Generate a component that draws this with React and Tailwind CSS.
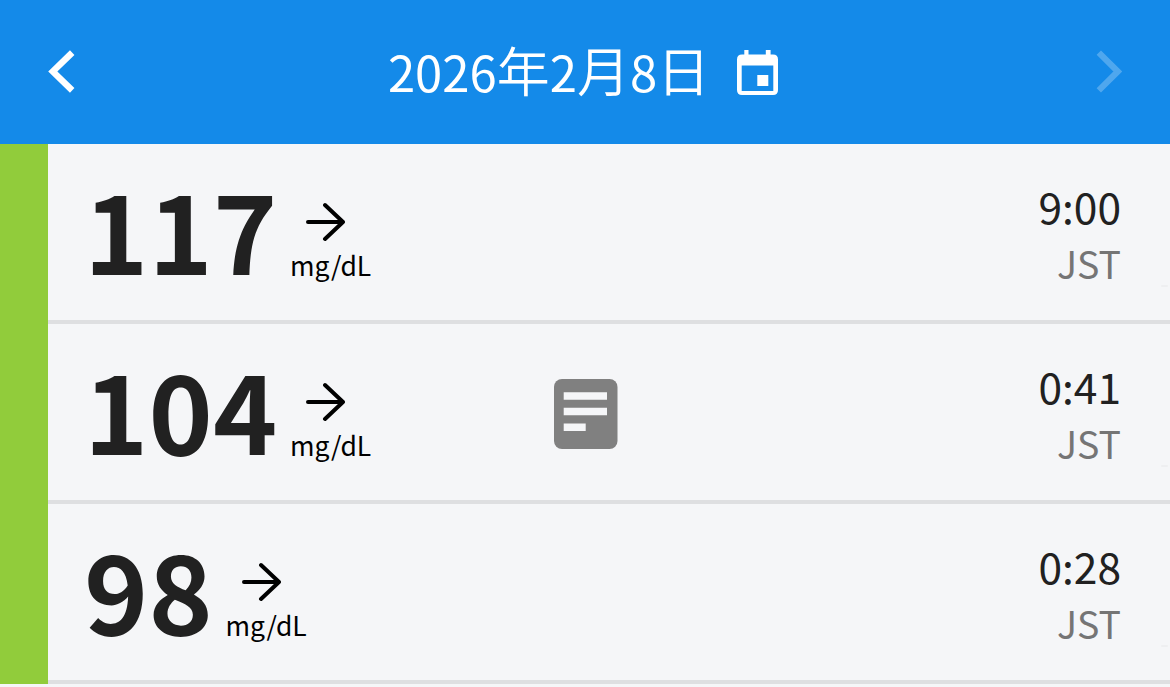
const rows = [
  { value: '117', time: '9:00' },
  { value: '104', time: '0:41', note: true },
  { value: '98', time: '0:28' },
];

function Kanji({ children }) {
  return <span className="text-[53px] font-[350]">{children}</span>;
}

function Reading({ value, time, note }) {
  return (
    <section className="grid h-[180px] shrink-0 grid-cols-[470px_64px_1fr_49px] border-b-4 border-[#dedfe1] pl-[36px]">
      <div className="flex">
        <div className="-mt-[4px] text-[109px] leading-[176px] font-bold tracking-[0.2px] text-[#212121]">{value}</div>
        <div className="ml-[12.5px] flex flex-col pt-[58px] text-black">
          <svg className="ml-[15px]" width="40" height="40" viewBox="0 0 40 40" fill="none" stroke="currentColor" strokeWidth="4" strokeLinecap="round" strokeLinejoin="round"><path d="M3 20H38M20 3L38 20L20 37" /></svg>
          <div className="mt-[5px] text-[26.5px] leading-9">mg/dL</div>
        </div>
      </div>
      <div className="pt-[55px]">
        {note && <svg width="64" height="70" viewBox="0 0 64 70"><rect width="63.5" height="70" rx="8" fill="#808080" /><path fill="#f5f6f8" d="M9.7 13.3h43.3v7.5H9.7zM9.7 28.8h43.3v7.5H9.7zM9.7 44.6h22v7.5H9.7z" /></svg>}
      </div>
      <div className="flex flex-col items-end pt-[35px]">
        <div className="text-[42.5px] leading-[54px] text-[#212121]">{time}</div>
        <div className="text-[37.5px] leading-[60px] text-[#757575]">JST</div>
      </div>
      <div className="flex justify-end pt-[141px] pr-[2px]"><div className="h-[2px] w-[7px] rounded-full bg-[#eeeff1]" /></div>
    </section>
  );
}

export default function App() {
  return (
    <main className="flex h-[687px] w-[1170px] flex-col overflow-hidden bg-[#f5f6f8] font-['Noto_Sans_CJK_JP',sans-serif]">
      <header className="flex h-36 shrink-0 items-center justify-between bg-[#148ae9] px-12 text-white">
        <svg width="28" height="44" viewBox="0 0 28 44" fill="none" stroke="currentColor" strokeWidth="6.4"><path d="M24.2 2.6L4.8 21.5L24.2 40.4" /></svg>
        <div className="flex items-center gap-[27px] pr-[4px]">
          <h1 className="-mt-[5px] text-[49px] leading-[70px]">2026<Kanji>年</Kanji>2<Kanji>月</Kanji>8<Kanji>日</Kanji></h1>
          <svg width="41" height="45" viewBox="0 0 41 45"><path fill="currentColor" fillRule="evenodd" d="M7.3 0h4.2v4.5h17.3V0h4.8v4.5H36q5 0 5 5V40q0 5-5 5H5q-5 0-5-5V9.500q0-5 5-5h2.300zM4.700 15.500v25.500h31.600V15.500zM20.300 25h11v11h-11z" /></svg>
        </div>
        <svg className="opacity-25" width="28" height="44" viewBox="0 0 28 44" fill="none" stroke="currentColor" strokeWidth="6.2"><path d="M4.800 2.600L23.800 21.500L4.800 40.400" /></svg>
      </header>
      <div className="flex h-[543px]">
        <div className="h-[540px] w-12 bg-[#91cc3b]" />
        <div className="flex flex-1 flex-col">{rows.map((row) => <Reading key={row.value} {...row} />)}</div>
      </div>
    </main>
  );
}
